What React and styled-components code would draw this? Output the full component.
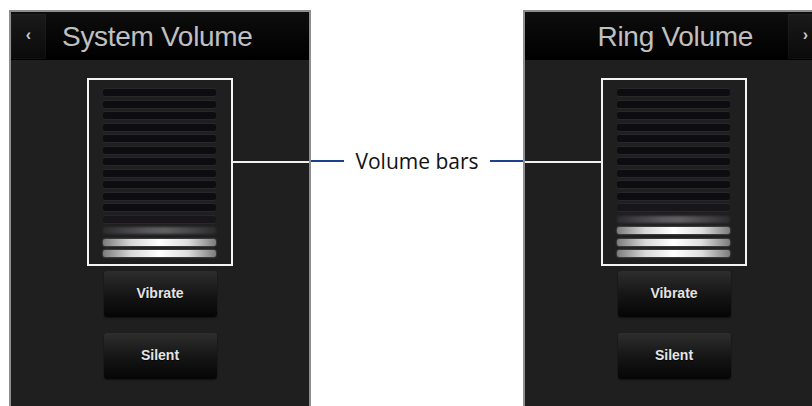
import React from "react";
import styled, { createGlobalStyle, css } from "styled-components";

const Global = createGlobalStyle`
  html, body { margin: 0; padding: 0; background: #ffffff; }
  body { font-family: "Liberation Sans", Arial, sans-serif; }
`;

const Page = styled.div`
  width: 812px;
  height: 406px;
  overflow: hidden;
  display: flex;
  align-items: flex-start;
  padding: 10px 0 0 9px;
  box-sizing: border-box;
  background: #fff;
`;

const Phone = styled.section`
  flex: 0 0 302px;
  height: 420px;
  box-sizing: border-box;
  border: 2px solid #8e8e8e;
  border-bottom: none;
  background: #1f1f1f;
  display: flex;
  flex-direction: column;
`;

const Header = styled.header`
  height: 48px;
  display: flex;
  align-items: center;
  justify-content: ${(p) => (p.$right ? "flex-end" : "flex-start")};
  background: linear-gradient(#0d0d0d, #000000);
`;

const NavButton = styled.div`
  flex: 0 0 35px;
  height: 45px;
  display: flex;
  align-items: center;
  justify-content: center;
  background: linear-gradient(#1a1a1a, #0a0a0a);
  box-shadow: inset 0 0 0 1px rgba(255, 255, 255, 0.03);
  color: #c8c8c8;
  font-size: 16px;
  font-weight: 700;
  line-height: 1;
  padding-bottom: 3px;
  box-sizing: border-box;
`;

const Title = styled.h1`
  margin: 0 ${(p) => (p.$right ? "35px" : "0")} 0 ${(p) => (p.$right ? "0" : "16px")};
  font-family: "Liberation Sans", Arial, sans-serif;
  font-weight: 400;
  font-size: 28px;
  letter-spacing: -0.3px;
  color: #c0c0c0;
  line-height: 1;
  padding-top: 2px;
`;

const Body = styled.div`
  display: flex;
  flex-direction: column;
  align-items: center;
  padding-top: 18px;
`;

const BarBox = styled.div`
  position: relative;
  width: 146px;
  height: 188px;
  box-sizing: border-box;
  border: 2px solid #f4f4f4;
  padding: 9px 15px 7px 14px;
  display: flex;
  flex-direction: column;
  justify-content: space-between;
`;

const Leader = styled.div`
  position: absolute;
  top: 81px;
  width: 78px;
  height: 2px;
  background: #f0f0f0;
  ${(p) => (p.$side === "right" ? css`left: 100%;` : css`right: 100%;`)}
`;

const Bar = styled.div`
  height: 7px;
  border-radius: 2px;
  ${(p) =>
    p.$state === "on"
      ? css`
          background: linear-gradient(90deg, #7c7c7c, #d8d8d8 25%, #ffffff 50%, #dedede 75%, #7c7c7c);
          box-shadow: 0 0 2px rgba(255, 255, 255, 0.45);
          filter: blur(0.4px);
        `
      : p.$state === "glow"
      ? css`
          background: linear-gradient(90deg, #2e2c30, #5a585c 40%, #626062 55%, #2e2c30);
          filter: blur(1.2px);
        `
      : css`
          background: ${p.$warm ? "#18161a" : "#0d0c10"};
          box-shadow: 0 -1px 0 rgba(255, 255, 255, 0.04), 0 1px 1px rgba(255, 255, 255, 0.05);
        `}
`;

const Button = styled.button`
  width: 113px;
  height: 46px;
  margin-top: ${(p) => p.$gap}px;
  border: none;
  border-radius: 3px;
  background: linear-gradient(#2e2e2e, #161616 50%, #050505);
  box-shadow: 0 1px 2px rgba(0, 0, 0, 0.5);
  color: #e4e4e4;
  font-family: "Liberation Sans", Arial, sans-serif;
  font-weight: 700;
  font-size: 14px;
  text-shadow: 0 1px 1px rgba(0, 0, 0, 0.8);
  padding: 0 0 2px;
`;

const Middle = styled.div`
  flex: 0 0 212px;
  padding-top: 137px;
`;

const Callout = styled.div`
  display: flex;
  align-items: center;
  height: 28px;
`;

const BlueLine = styled.div`
  flex: 0 0 33px;
  height: 2px;
  background: #1f3f8f;
`;

const Label = styled.span`
  flex: 1;
  text-align: center;
  font-family: "Open Sans", "Noto Sans", sans-serif;
  font-size: 21px;
  color: #111;
  line-height: 1;
`;

function VolumePanel({ title, level, side }) {
  const bars = Array.from({ length: 15 }, (_, i) => {
    const state = i >= 15 - level ? "on" : i === 14 - level ? "glow" : "off";
    return <Bar key={i} $state={state} $warm={i === 13 - level} />;
  });
  const right = side === "right";
  return (
    <Phone>
      <Header $right={right}>
        {!right && <NavButton>‹</NavButton>}
        <Title $right={right}>{title}</Title>
        {right && <NavButton>›</NavButton>}
      </Header>
      <Body>
        <BarBox>
          {bars}
          <Leader $side={right ? "left" : "right"} />
        </BarBox>
        <Button $gap={5}>Vibrate</Button>
        <Button $gap={16}>Silent</Button>
      </Body>
    </Phone>
  );
}

export default function App() {
  return (
    <>
      <Global />
      <Page>
        <VolumePanel title="System Volume" level={2} side="left" />
        <Middle>
          <Callout>
            <BlueLine />
            <Label>Volume bars</Label>
            <BlueLine />
          </Callout>
        </Middle>
        <VolumePanel title="Ring Volume" level={3} side="right" />
      </Page>
    </>
  );
}
